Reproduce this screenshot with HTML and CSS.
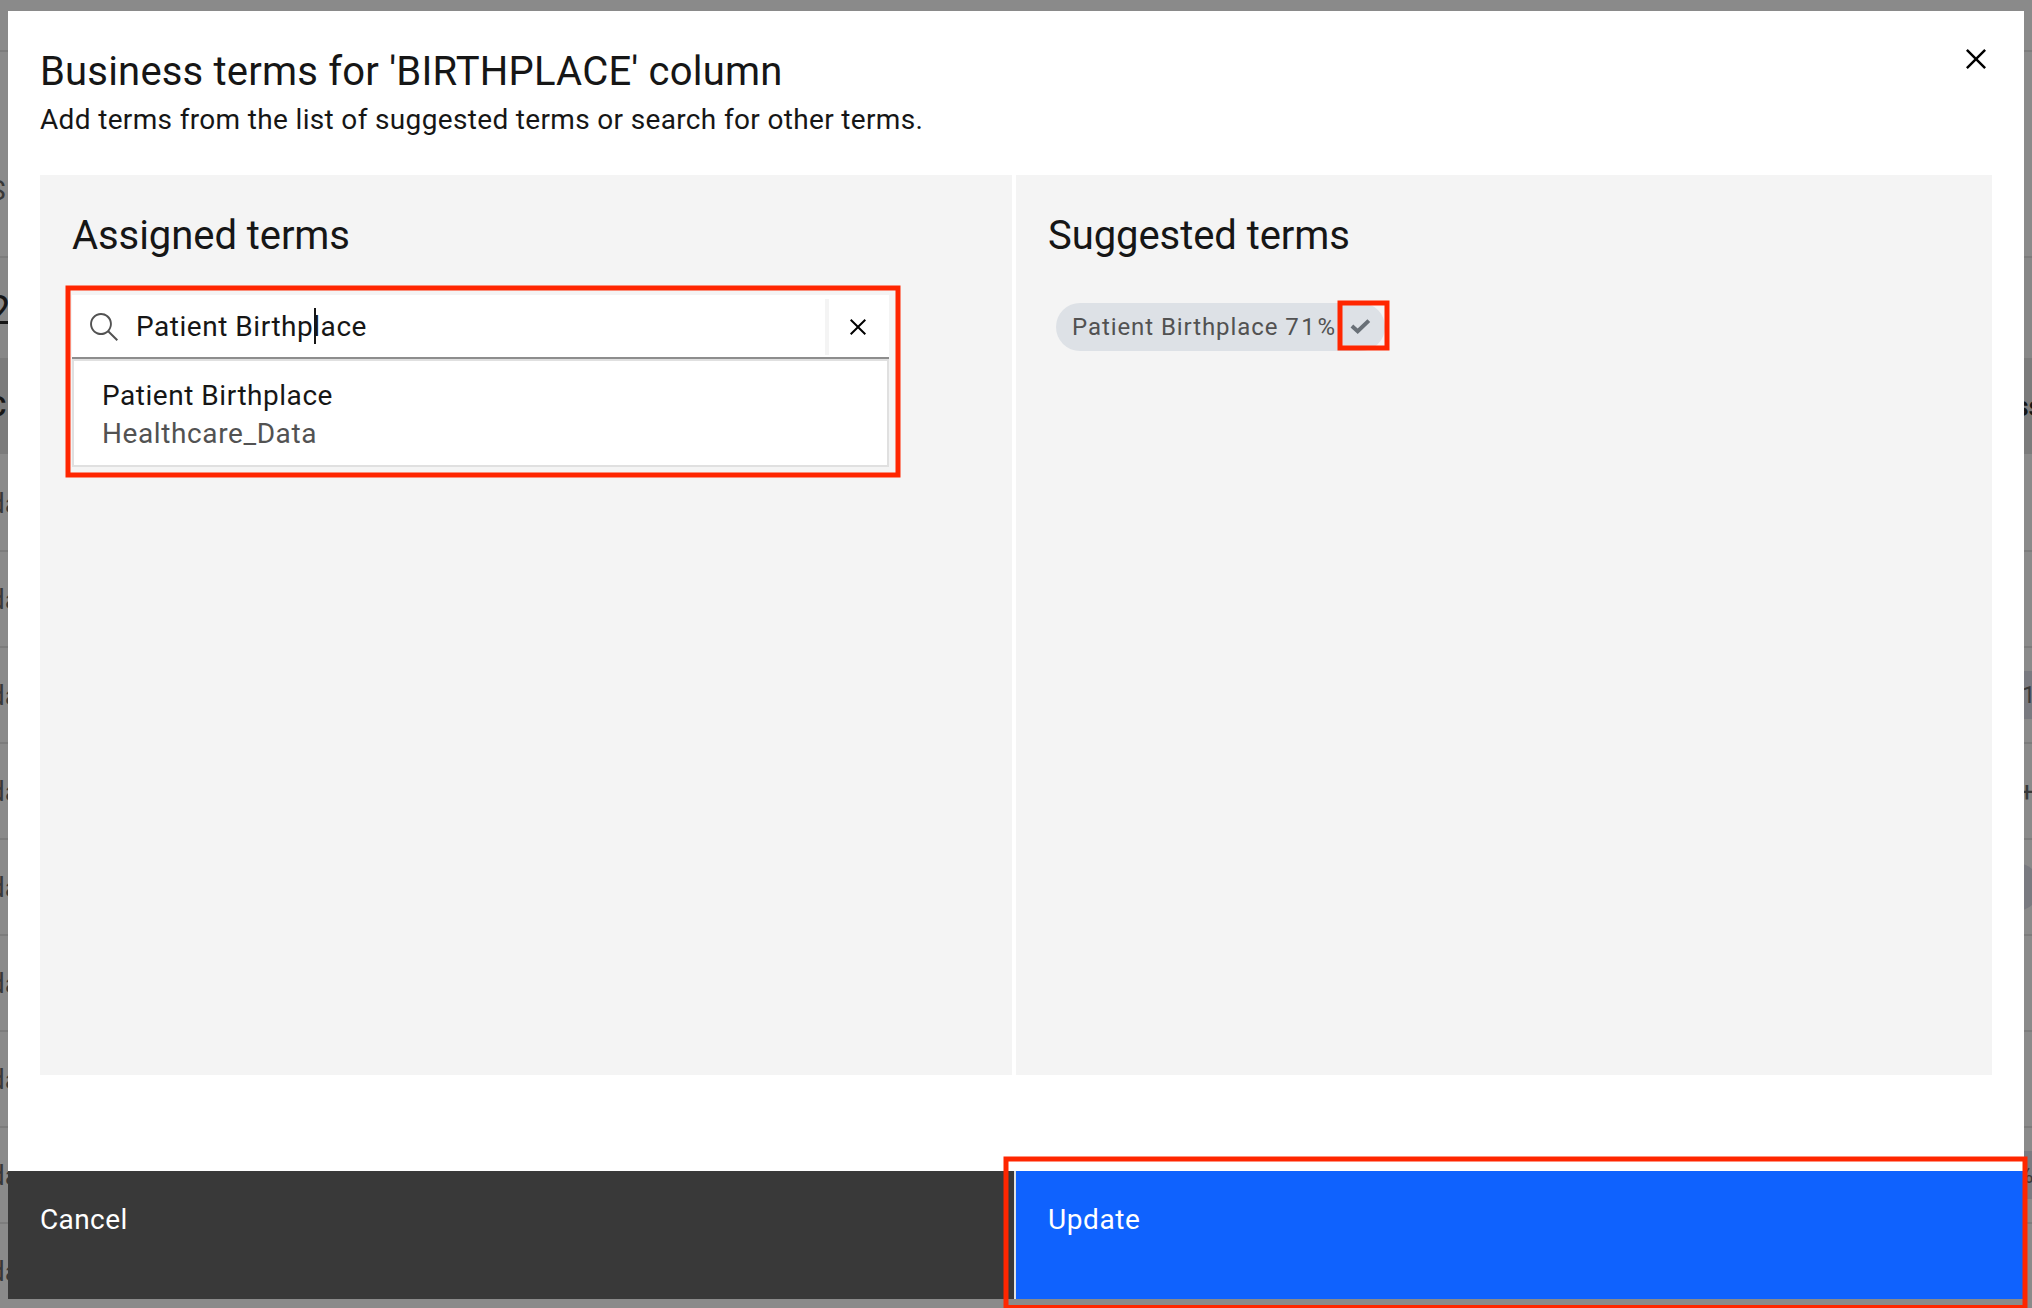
FILE: index.html
```html
<!DOCTYPE html>
<html lang="en">
<head>
<meta charset="utf-8">
<title>Business terms</title>
<link rel="stylesheet" href="styles.css">
</head>
<body>
<div class="page">
  <div class="bar"></div>
  <div class="crumbs"><span>S</span></div>
  <div class="heading"><span>2</span></div>
  <div class="row head"><span class="cell">C</span><span class="cell-end">ss</span></div>
  <div class="row first"><span class="cell">da</span></div>
  <div class="row"><span class="cell">da</span></div>
  <div class="row"><span class="cell">da</span><span class="chip one">1</span></div>
  <div class="row"><span class="cell">da</span><span class="plus">+</span></div>
  <div class="row"><span class="cell">da</span><span class="chip round"></span></div>
  <div class="row"><span class="cell">da</span></div>
  <div class="row"><span class="cell">da</span></div>
  <div class="row"><span class="cell">da</span><span class="chip percent">%</span></div>
  <div class="row"><span class="cell">da</span></div>
</div>

<div class="modal">
  <header class="modal-header">
    <div>
      <h1 class="title">Business terms for 'BIRTHPLACE' column</h1>
      <p class="subtitle">Add terms from the list of suggested terms or search for other terms.</p>
    </div>
    <svg class="close" viewBox="0 0 32 32"><path d="M24 9.4 22.6 8 16 14.6 9.4 8 8 9.4l6.6 6.6L8 22.6 9.4 24l6.6-6.6 6.6 6.6 1.4-1.4-6.6-6.6L24 9.4z"/></svg>
  </header>
  <main class="panels">
    <section class="panel">
      <h2 class="panel-title">Assigned terms</h2>
      <div class="search">
        <svg class="search-icon" viewBox="0 0 16 16"><path d="M15,14.3L10.7,10c1.9-2.3,1.6-5.8-0.7-7.7S4.2,0.7,2.3,3S0.7,8.8,3,10.7c2,1.7,5,1.7,7,0l4.3,4.3L15,14.3z M2,6.5C2,4,4,2,6.5,2S11,4,11,6.5S9,11,6.5,11S2,9,2,6.5z"/></svg>
        <span class="query">Patient Birthplace<i class="caret"></i></span>
        <span class="clear"><svg viewBox="0 0 32 32"><path d="M24 9.4 22.6 8 16 14.6 9.4 8 8 9.4l6.6 6.6L8 22.6 9.4 24l6.6-6.6 6.6 6.6 1.4-1.4-6.6-6.6L24 9.4z"/></svg></span>
      </div>
      <div class="options">
        <div class="option-name">Patient Birthplace</div>
        <div class="option-path">Healthcare_Data</div>
      </div>
    </section>
    <section class="panel">
      <h2 class="panel-title">Suggested terms</h2>
      <div class="tag"><span>Patient Birthplace <span class="score">71%</span></span>
        <svg class="check" viewBox="0 0 24 20"><path d="M3.9 9 9.7 14.2 20.8 3.6"/></svg>
      </div>
    </section>
  </main>
  <footer class="actions">
    <div class="btn cancel"><span>Cancel</span></div>
    <div class="btn update"><span>Update</span></div>
  </footer>
</div>

<svg class="marks" viewBox="0 0 2032 1308">
  <rect x="68" y="288" width="830" height="187"/>
  <rect x="1340" y="303" width="47" height="45"/>
  <rect x="1006" y="1159" width="1019" height="148.5"/>
</svg>
</body>
</html>
```
FILE: styles.css
```css
* { box-sizing: border-box; }
body {
  margin: 0;
  width: 2032px;
  height: 1308px;
  overflow: hidden;
  position: relative;
  background: #8a8a8a;
  color: #161616;
  font-family: Roboto, "Liberation Sans", sans-serif;
  font-size: 28px;
  line-height: 36px;
}
h1, h2, p { margin: 0; font-weight: 400; }

/* dimmed page behind the dialog */
.page { height: 1308px; overflow: hidden; }
.bar { height: 52px; border-bottom: 2px solid #7c7c7c; }
.crumbs { height: 206px; padding-top: 121px; border-bottom: 2px solid #7c7c7c; color: #383838; }
.crumbs span { display: block; margin-left: -11px; }
.heading { height: 100px; padding-top: 29px; font-size: 40px; line-height: 48px; background: #878787; }
.heading span { display: block; margin-left: -12px; }
.row {
  height: 96px;
  padding-top: 30px;
  border-bottom: 2px solid #7c7c7c;
  display: flex;
  justify-content: space-between;
  color: #383838;
}
.row.first { height: 98px; padding-top: 32px; }
.row.head { background: #7b7b7b; border: 0; padding-top: 31px; color: #161616; font-weight: 600; }
.cell { margin-left: -11px; }
.head .cell { margin-left: -12px; }
.cell-end { margin-right: -11px; }
.chip { height: 48px; margin-top: -7px; background: #797a80; line-height: 48px; width: 40px; margin-right: -24px; font-size: 24px; }
.chip.one { padding-left: 6px; }
.chip.round { width: 48px; margin-right: -8px; border-radius: 24px; }
.chip.percent { padding-left: 0; }
.plus { margin-right: -3px; }

/* dialog */
.modal {
  position: absolute;
  left: 8px;
  top: 11px;
  width: 2016px;
  height: 1288px;
  background: #fff;
  display: flex;
  flex-direction: column;
}
.modal-header { height: 164px; padding: 37px 28px 0 32px; display: flex; justify-content: space-between; }
.title { font-size: 40px; line-height: 48px; letter-spacing: .19px; padding-bottom: 6px; }
.subtitle { letter-spacing: .34px; }
.close { width: 40px; height: 40px; margin-top: -9px; }
.panels { height: 900px; padding: 0 32px; display: grid; grid-template-columns: 972px 976px; gap: 4px; }
.panel { background: #f4f4f4; padding: 37px 32px; }
.panel-title { font-size: 40px; line-height: 48px; letter-spacing: -.07px; }
.search {
  width: 817px;
  height: 64px;
  margin-top: 35px;
  padding: 3px 0 1px 16px;
  border-bottom: 2px solid #8d8d8d;
  background: #fff;
  display: flex;
  align-items: center;
}
.search-icon { width: 32px; height: 32px; fill: #525252; }
.query { margin-left: 16px; letter-spacing: .53px; position: relative; }
.caret { position: absolute; left: 178px; top: -1px; width: 2px; height: 36px; background: #161616; }
.clear { margin-left: auto; width: 64px; height: 56px; border-left: 4px solid #f4f4f4; display: flex; align-items: center; padding-left: 13px; }
.clear svg { width: 32px; height: 32px; }
.options { width: 817px; height: 108px; border: 2px solid #e0e0e0; background: #fff; padding: 17px 28px; letter-spacing: .53px; }
.option-name { padding-bottom: 2px; }
.option-path { color: #525252; letter-spacing: .6px; }
.tag {
  width: 329px;
  height: 48px;
  margin: 43px 0 0 8px;
  padding-left: 16px;
  border-radius: 24px;
  background: #dde1e6;
  color: #525252;
  font-size: 24px;
  letter-spacing: .92px;
  display: flex;
  align-items: center;
  position: relative;
}
.score { letter-spacing: 2.6px; }
.check { position: absolute; left: 292px; top: 14px; width: 24px; height: 20px; fill: none; stroke: #697077; stroke-width: 4; }
.actions { margin-top: auto; height: 128px; display: grid; grid-template-columns: 1006px 1fr; color: #fff; }
.btn { padding: 31px 32px; letter-spacing: .6px; }
.cancel { background: #393939; letter-spacing: .4px; }
.update { background: #0f62fe; border-left: 2px solid #e0e0e0; }
.marks { position: absolute; left: 0; top: 0; width: 2032px; height: 1308px; fill: none; stroke: #ff2600; stroke-width: 5; }
```
